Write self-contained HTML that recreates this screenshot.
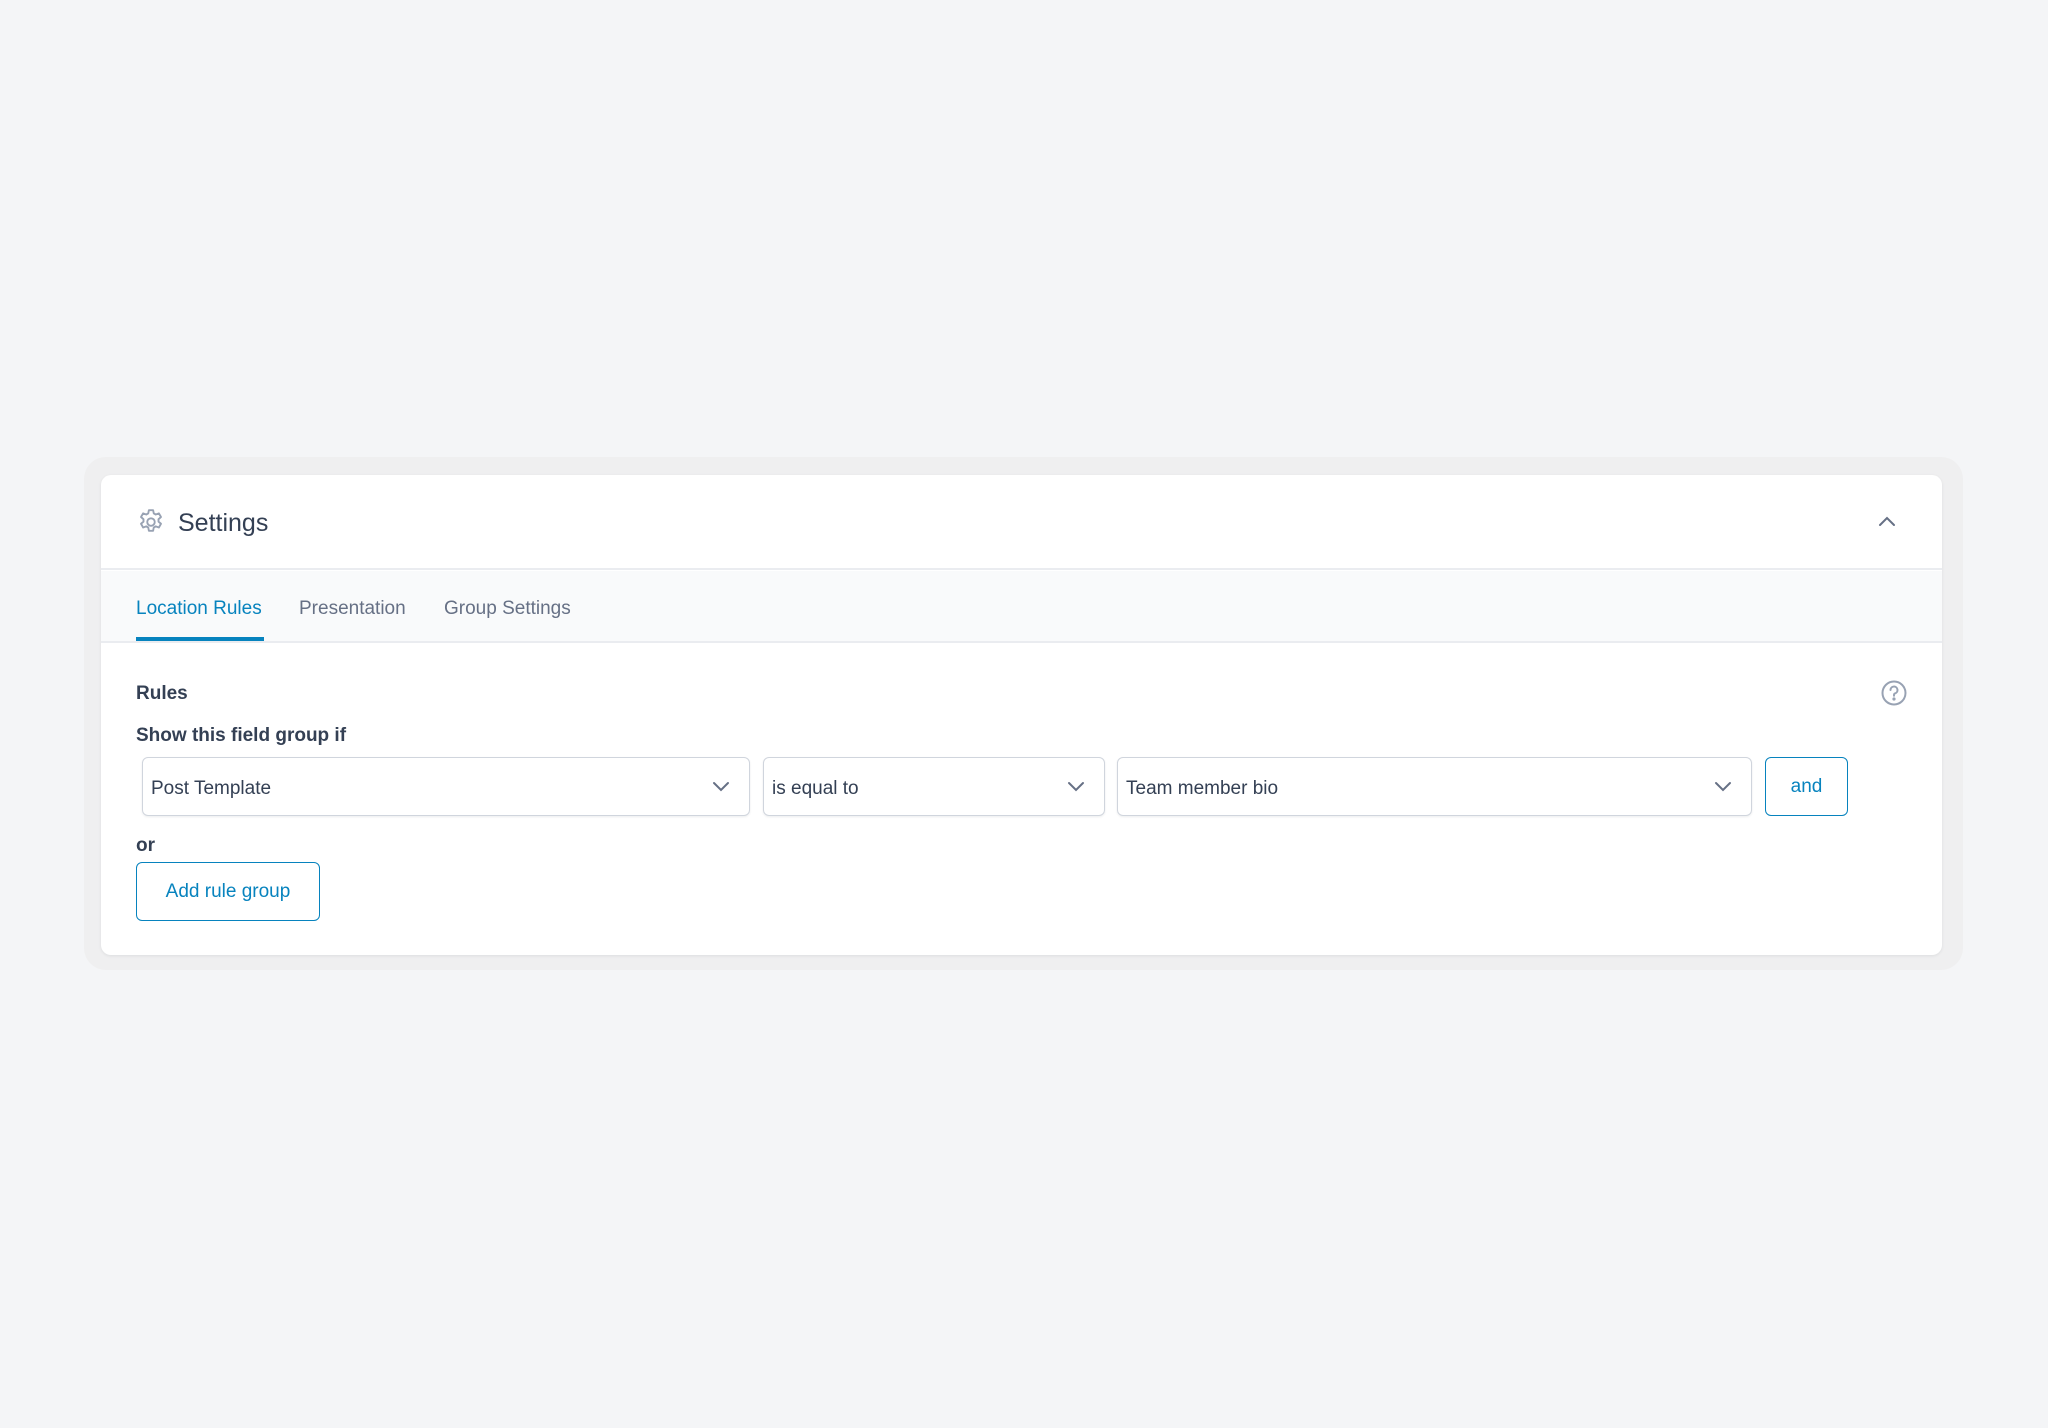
<!DOCTYPE html>
<html><head><meta charset="utf-8"><style>
*{box-sizing:border-box;margin:0;padding:0}
body{width:2048px;height:1428px;background:#f4f5f7;font-family:"Liberation Sans",sans-serif;position:relative;overflow:hidden;color:#344054}
.outer{position:absolute;left:84px;top:457px;width:1879px;height:513px;background:#efeff0;border-radius:22px}
.card{position:absolute;left:101px;top:475px;width:1841px;height:480px;background:#fff;border-radius:10px;box-shadow:0 1px 3px rgba(16,24,40,.08);overflow:hidden}
.hdr{position:absolute;left:0;top:0;width:100%;height:95px;border-bottom:2px solid #eaecf0}
.title{position:absolute;left:77px;top:34px;font-size:25px;color:#344054}
.tabs{position:absolute;left:0;top:96px;width:100%;height:72px;background:#f9fafb;border-bottom:2px solid #eaecf0}
.tab{position:absolute;top:27px;font-size:19px;color:#667085}
.abs{position:absolute}
.lbl{position:absolute;font-size:19px;font-weight:bold;color:#344054}
.sel{position:absolute;top:282px;height:59px;border:1.5px solid #d0d5dd;border-radius:6px;box-shadow:0 1px 2px rgba(16,24,40,.08);font-size:19px;color:#344054;padding:20px 0 0 8px}
.sel svg{position:absolute;right:18px;top:22px}
.btn{position:absolute;border:1.5px solid #0783be;border-radius:6px;color:#0783be;font-size:19px;text-align:center}
</style></head><body>
<div class="outer"></div>
<div class="card">
 <div class="hdr">
  <svg class="abs" style="left:35px;top:32px" width="30" height="30" viewBox="0 0 24 24" fill="none" stroke="#98a2b3" stroke-width="1.5" stroke-linejoin="round"><path d="M10.3 2.5h3.4l.5 2.6 1.6.9 2.5-.9 1.7 2.9-2 1.8v1.9l2 1.7-1.7 3-2.5-.9-1.6.9-.5 2.6h-3.4l-.5-2.6-1.6-.9-2.5.9-1.7-3 2-1.7v-1.9l-2-1.8 1.7-2.9 2.5.9 1.6-.9z"/><circle cx="12" cy="12" r="3"/></svg>
  <div class="title">Settings</div>
  <svg class="abs" style="left:1776px;top:39px" width="20" height="14" viewBox="0 0 20 14" fill="none" stroke="#667085" stroke-width="2" stroke-linecap="round"><path d="M3 11l7-7 7 7"/></svg>
 </div>
 <div class="tabs">
  <div class="tab" style="left:35px;color:#0783be">Location Rules</div>
  <div class="tab" style="left:198px">Presentation</div>
  <div class="tab" style="left:343px">Group Settings</div>
  <div class="abs" style="left:35px;top:66px;width:128px;height:4px;background:#0783be"></div>
 </div>
 <div class="lbl" style="left:35px;top:208px">Rules</div>
 <svg class="abs" style="left:1779px;top:204px" width="28" height="28" viewBox="0 0 28 28" fill="none" stroke="#98a2b3" stroke-width="2"><circle cx="14" cy="14" r="11.5"/><path d="M10.5 11a3.5 3.5 0 1 1 4.5 3.4c-.7.3-1 .8-1 1.6v.8" stroke-linecap="round"/><circle cx="14" cy="20" r=".6" fill="#98a2b3"/></svg>
 <div class="lbl" style="left:35px;top:250px">Show this field group if</div>
 <div class="sel" style="left:41px;width:608px">Post Template<svg width="20" height="14" viewBox="0 0 20 14" fill="none" stroke="#667085" stroke-width="2" stroke-linecap="round"><path d="M3 3l7 7 7-7"/></svg></div>
 <div class="sel" style="left:662px;width:342px">is equal to<svg width="20" height="14" viewBox="0 0 20 14" fill="none" stroke="#667085" stroke-width="2" stroke-linecap="round"><path d="M3 3l7 7 7-7"/></svg></div>
 <div class="sel" style="left:1016px;width:635px">Team member bio<svg width="20" height="14" viewBox="0 0 20 14" fill="none" stroke="#667085" stroke-width="2" stroke-linecap="round"><path d="M3 3l7 7 7-7"/></svg></div>
 <div class="btn" style="left:1664px;top:282px;width:83px;height:59px;line-height:58px">and</div>
 <div class="lbl" style="left:35px;top:360px">or</div>
 <div class="btn" style="left:35px;top:387px;width:184px;height:59px;line-height:58px">Add rule group</div>
</div>
</body></html>
